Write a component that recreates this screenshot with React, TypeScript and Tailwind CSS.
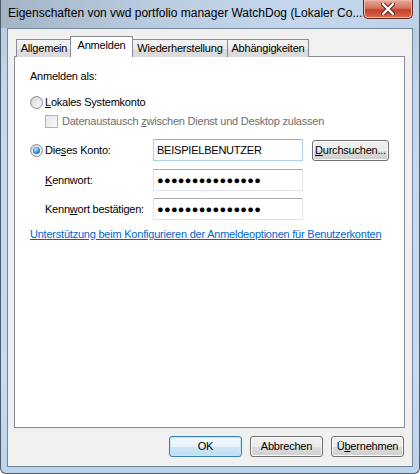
import React from 'react';

// Windows 7 Dienst-Eigenschaften, Registerkarte "Anmelden"

function Radio({ checked }: { checked?: boolean }) {
    return (
        <span className="flex h-[13px] w-[13px] shrink-0 items-center justify-center rounded-full border border-[#8e8f8f] bg-[linear-gradient(135deg,#c9c9c9,#f7f7f7)]">
            <span className="flex h-[9px] w-[9px] items-center justify-center rounded-full bg-[linear-gradient(135deg,#d8d8d8,#fbfbfb)]">
                {checked && (
                    <span className="h-[7px] w-[7px] rounded-full bg-[radial-gradient(circle_at_40%_35%,#b9ecff,#2c8ad8_55%,#0a3f86)]" />
                )}
            </span>
        </span>
    );
}

function Button({ children, primary }: { children: React.ReactNode; primary?: boolean }) {
    return (
        <div
            className={`flex h-[21px] w-[73px] items-center justify-center rounded-[3px] border text-[11px] leading-none tracking-[-0.2px] text-black ${
                primary
                    ? 'border-[#3c7fb1] bg-[linear-gradient(#f3f9fd,#e6f2fb_50%,#cde6f6_51%,#bfdff3)] shadow-[inset_0_0_0_1px_#bfe4fb]'
                    : 'border-[#707070] bg-[linear-gradient(#f2f2f2,#ebebeb_50%,#dddddd_51%,#cfcfcf)] shadow-[inset_0_0_0_1px_#fbfbfb]'
            }`}
        >
            {children}
        </div>
    );
}

function TextBox({ children, focused }: { children: React.ReactNode; focused?: boolean }) {
    return (
        <div
            className={`flex h-[22px] w-[150px] items-center border bg-white pl-[3px] text-[11px] leading-none text-black ${
                focused
                    ? 'border-[#b5cfe7] border-t-[#7eb4ea]'
                    : 'border-[#e2e3ea] border-t-[#abadb3]'
            }`}
        >
            {children}
        </div>
    );
}

const dots = '●●●●●●●●●●●●●●●';

export default function App() {
    const tabs = [
        { label: 'Allgemein', w: 'w-[56px]' },
        { label: 'Anmelden', w: 'w-[63px]', active: true },
        { label: 'Wiederherstellung', w: 'w-[96px]' },
        { label: 'Abhängigkeiten', w: 'w-[82px]' },
    ];

    return (
        <div className="flex h-[474px] w-[420px] flex-col overflow-hidden rounded-b-[6px] border-x border-b border-[#4d5b6b] bg-[linear-gradient(to_bottom,#b3c8de,#c3d8ef_20%,#c6dcf3_80%,#bcd3ec)] font-['Liberation_Sans',Arial,sans-serif]">
            {/* Titelleiste */}
            <div className="flex h-[28px] shrink-0 items-start justify-between bg-[linear-gradient(to_right,#a4b4c6,#b9cbdf_35%,#c4d7ec_70%,#bdd3ea)]">
                <span className="mt-[6px] pl-[7px] text-[12px] leading-[15px] whitespace-nowrap text-black">
                    Eigenschaften von vwd portfolio manager WatchDog (Lokaler Co...
                </span>
                <div className="mr-[6px] flex h-[19px] w-[50px] items-center justify-center rounded-b-[5px] border border-t-0 border-[#6b2a22] bg-[linear-gradient(#e9a99b,#d8725f_45%,#c2402c_55%,#d66f4f)] shadow-[inset_0_0_0_1px_#f0b7a8]">
                    <svg width="14" height="12" viewBox="0 0 14 12">
                        <path d="M2 1 L12 11 M12 1 L2 11" stroke="#5a1d15" strokeWidth="4.2" strokeLinecap="round" />
                        <path d="M2 1 L12 11 M12 1 L2 11" stroke="#ffffff" strokeWidth="2.4" strokeLinecap="round" />
                    </svg>
                </div>
            </div>

            {/* Client-Bereich */}
            <div className="mx-[6px] mb-[6px] flex flex-1 flex-col border border-[#75879b] bg-[#f0f0f0] pt-[7px] pr-[7px] pl-[6px]">
                {/* Registerkarten */}
                <div className="relative z-10 -mb-px flex h-[21px] items-end pl-[2px] tracking-[-0.2px]">
                    {tabs.map((t) =>
                        t.active ? (
                            <div
                                key={t.label}
                                className={`-mx-[1px] flex h-[21px] ${t.w} items-start justify-center border border-b-0 border-[#898c95] bg-white pt-[2px] text-[11px] leading-[13px] text-black`}
                            >
                                {t.label}
                            </div>
                        ) : (
                            <div
                                key={t.label}
                                className={`-mr-px flex h-[18px] ${t.w} items-start justify-center border border-b-0 border-[#898c95] bg-[linear-gradient(#f3f3f3,#ebebeb_50%,#dedede_51%,#dadada)] pt-[2px] text-[11px] leading-[13px] text-black`}
                            >
                                {t.label}
                            </div>
                        )
                    )}
                </div>

                {/* Seite */}
                <div className="flex h-[372px] flex-col border border-[#898c95] bg-white pt-[13px] pl-[15px] text-[11px] leading-[13px] tracking-[-0.22px] text-black">
                    <div>Anmelden als:</div>

                    <div className="mt-[13px] flex h-[13px] items-center gap-[2px]">
                        <Radio />
                        <span>
                            <u>L</u>okales Systemkonto
                        </span>
                    </div>

                    <div className="mt-[6px] flex h-[13px] items-center gap-[4px] pl-[15px] text-[#6d6d6d]">
                        <span className="h-[13px] w-[13px] border border-[#b1b1b1] bg-[linear-gradient(135deg,#e6e6e6,#fafafa)]" />
                        <span>
                            Datenaustausch <u>z</u>wischen Dienst und Desktop zulassen
                        </span>
                    </div>

                    <div className="mt-[11px] flex items-start">
                        <div className="flex h-[22px] w-[123px] items-center gap-[2px]">
                            <Radio checked />
                            <span>
                                Die<u>s</u>es Konto:
                            </span>
                        </div>
                        <TextBox focused>BEISPIELBENUTZER</TextBox>
                        <div className="mt-px ml-[9px] flex h-[21px] w-[77px] items-center justify-center rounded-[3px] border border-[#707070] bg-[linear-gradient(#f2f2f2,#ebebeb_50%,#dddddd_51%,#cfcfcf)] shadow-[inset_0_0_0_1px_#fbfbfb]">
                            <span>
                                <u>D</u>urchsuchen...
                            </span>
                        </div>
                    </div>

                    <div className="mt-[8px] flex items-center">
                        <span className="w-[123px] pl-[15px]">
                            <u>K</u>ennwort:
                        </span>
                        <TextBox>
                            <span className="tracking-[0.3px]">{dots}</span>
                        </TextBox>
                    </div>

                    <div className="mt-[7px] flex items-center">
                        <span className="w-[123px] pl-[15px]">
                            Kenn<u>w</u>ort bestätigen:
                        </span>
                        <TextBox>
                            <span className="tracking-[0.3px]">{dots}</span>
                        </TextBox>
                    </div>

                    <div className="mt-[8px] text-[#0066cc] underline">
                        Unterstützung beim Konfigurieren der Anmeldeoptionen für Benutzerkonten
                    </div>
                </div>

                {/* Schaltflächen */}
                <div className="mt-[8px] flex justify-end gap-[8px] pr-px">
                    <Button primary>OK</Button>
                    <Button>Abbrechen</Button>
                    <Button>
                        <span>
                            Ü<u>b</u>ernehmen
                        </span>
                    </Button>
                </div>
            </div>
        </div>
    );
}
